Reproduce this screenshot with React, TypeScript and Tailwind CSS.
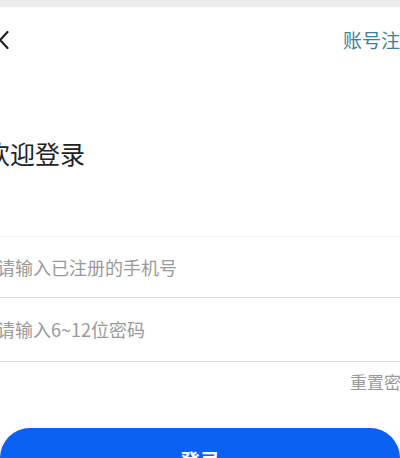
export default function App() {
    const font = { fontFamily: '"Noto Sans CJK SC", "Noto Sans", sans-serif' };

    return (
        <div className="w-[400px] h-[458px] overflow-hidden bg-white" style={font}>
            <div className="h-[7px] bg-[#ececec]" />

            <div className="h-[66px] flex items-center justify-between">
                <svg className="-ml-[3px] shrink-0" width="12" height="20" viewBox="0 0 12 20" fill="none">
                    <polyline points="10.5,2 3,10 10.5,18" stroke="#1f1f1f" strokeWidth="2.2" strokeLinecap="round" strokeLinejoin="round" />
                </svg>
                <span className="-mr-[19px] whitespace-nowrap text-[19px] leading-[26px] text-[#3f7f96]">账号注册</span>
            </div>

            <div className="mt-[63px] -ml-[15px] text-[25px] leading-[34px] text-[#222222] whitespace-nowrap">欢迎登录</div>

            <div className="mt-[66px] border-t border-[#f3f3f3]">
                <div className="h-[61px] flex items-center border-b border-[#dedede]">
                    <input
                        className="-ml-[3px] w-[320px] outline-none bg-transparent text-[18px] placeholder:text-[#9a9a9a]"
                        placeholder="请输入已注册的手机号"
                    />
                </div>
                <div className="h-[64px] flex items-center border-b border-[#dedede]">
                    <input
                        type="password"
                        className="-ml-[3px] w-[320px] outline-none bg-transparent text-[18px] placeholder:text-[#9a9a9a]"
                        placeholder="请输入6~12位密码"
                    />
                </div>
            </div>

            <div className="h-[40px] flex items-center justify-end">
                <span className="-mr-[18px] whitespace-nowrap text-[17px] text-[#9a9a9a]">重置密码</span>
            </div>

            <button className="mt-[26px] w-full h-[60px] rounded-[30px] bg-[#0b62f2] text-white text-[20px] font-bold flex items-start justify-center pt-[18px]">
                登录
            </button>
        </div>
    )
}
